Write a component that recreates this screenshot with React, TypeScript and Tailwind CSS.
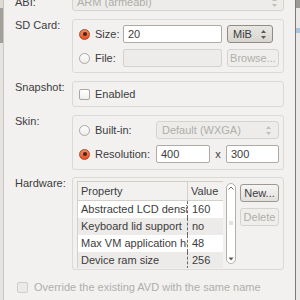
import type { ReactNode } from 'react';

const font = "font-['Liberation_Sans',sans-serif]";

// small stacked up/down arrows used by GTK combo boxes
const Arrows = ({ dim = false }: { dim?: boolean }) => (
  <svg width="7" height="11" viewBox="0 0 7 11" className="shrink-0">
    <polygon points="3.5,1 6,4 1,4" fill={dim ? '#c2bfbb' : '#5a5855'} />
    <polygon points="1,7 6,7 3.5,10" fill={dim ? '#c2bfbb' : '#5a5855'} />
  </svg>
);

const Radio = ({ on = false }: { on?: boolean }) =>
  on ? (
    <span className="w-[11px] h-[11px] rounded-full border border-[#b9451c] bg-gradient-to-b from-[#f6885a] to-[#df5426] flex items-center justify-center shrink-0">
      <span className="w-[4px] h-[4px] rounded-full bg-[#4a2418]" />
    </span>
  ) : (
    <span className="w-[11px] h-[11px] rounded-full border border-[#aaa7a3] bg-gradient-to-b from-white to-[#eeedeb] shrink-0" />
  );

const Check = ({ dim = false }: { dim?: boolean }) => (
  <span
    className={`w-[11px] h-[11px] rounded-[2px] border shrink-0 ${
      dim ? 'border-[#d0cdc9] bg-[#eceae8]' : 'border-[#a9a6a2] bg-gradient-to-b from-white to-[#f0efed]'
    }`}
  />
);

const Field = ({ w, children, dim = false }: { w: string; children?: ReactNode; dim?: boolean }) => (
  <div
    className={`${w} h-full rounded-[2px] border flex items-center pl-[4px] ${
      dim ? 'border-[#d6d3cf] bg-[#edecea]' : 'border-[#aeaaa5] bg-white text-[#3c3c3c]'
    }`}
  >
    {children}
  </div>
);

const Frame = ({ h, children, className = '' }: { h: string; children: ReactNode; className?: string }) => (
  <div className={`${h} w-[212px] rounded-[3px] border border-[#dcd9d5] ${className}`}>{children}</div>
);

const Label = ({ children }: { children: ReactNode }) => (
  <div className="w-[57px] h-[13px] flex items-center shrink-0 text-[#3c3c3c]">{children}</div>
);

const rows = [
  ['Abstracted LCD density', '160'],
  ['Keyboard lid support', 'no'],
  ['Max VM application heap size', '48'],
  ['Device ram size', '256'],
];

export default function App() {
  return (
    <div className={`w-[300px] h-[300px] bg-[#f2f1f0] overflow-hidden flex text-[11px] leading-[13px] ${font}`}>
      {/* left window edge */}
      <div className="w-[4px] h-full flex flex-col border-r border-[#c9c6c2]">
        <div className="h-[8px] bg-[#dddad6]" />
        <div className="h-[35px] bg-[#a3a09c]" />
        <div className="flex-1 bg-[#e6e4e1]" />
      </div>

      <div className="w-[291px] h-full flex flex-col pl-[11px]">
        {/* ABI */}
        <div className="flex items-center h-[18px] -mt-[7px]">
          <div className="w-[57px] text-[#3c3c3c]">ABI:</div>
          <div className="w-[212px] h-full rounded-[3px] border border-[#d6d3cf] bg-[#edecea] flex items-center justify-between pl-[4px] pr-[5px] text-[#aeaca9]">
            ARM (armeabi)
            <Arrows dim />
          </div>
        </div>

        {/* SD Card */}
        <div className="flex mt-[8px]">
          <Label>SD Card:</Label>
          <Frame h="h-[54px]" className="pl-[6px] pt-[5px] flex flex-col gap-[6px]">
            <div className="flex items-center h-[18px]">
              <div className="w-[44px] flex items-center gap-[5px] text-[#3c3c3c]">
                <Radio on />
                Size:
              </div>
              <Field w="w-[99px]">20</Field>
              <div className="ml-[5px] w-[46px] h-full rounded-[3px] border border-[#8f8c88] bg-gradient-to-b from-[#e9e7e4] to-[#d7d4d0] flex items-center justify-between pl-[5px] pr-[5px] text-[#3c3c3c]">
                MiB
                <Arrows />
              </div>
            </div>
            <div className="flex items-center h-[18px]">
              <div className="w-[44px] flex items-center gap-[5px] text-[#3c3c3c]">
                <Radio />
                File:
              </div>
              <Field w="w-[99px]" dim />
              <div className="ml-[5px] w-[52px] h-full rounded-[3px] border border-[#d6d3cf] bg-[#efeeec] flex items-center justify-center text-[#b0aeab]">
                Browse...
              </div>
            </div>
          </Frame>
        </div>

        {/* Snapshot */}
        <div className="flex mt-[8px]">
          <Label>Snapshot:</Label>
          <Frame h="h-[26px]" className="pl-[6px] pt-[4px]">
            <div className="flex items-center h-[16px] gap-[5px] text-[#3c3c3c]">
              <Check />
              Enabled
            </div>
          </Frame>
        </div>

        {/* Skin */}
        <div className="flex mt-[8px]">
          <Label>Skin:</Label>
          <Frame h="h-[55px]" className="pl-[6px] pt-[5px] flex flex-col gap-[6px]">
            <div className="flex items-center h-[18px]">
              <div className="w-[77px] flex items-center gap-[5px] text-[#3c3c3c]">
                <Radio />
                Built-in:
              </div>
              <div className="w-[123px] h-full rounded-[3px] border border-[#d6d3cf] bg-[#edecea] flex items-center justify-between pl-[5px] pr-[6px] text-[#b0aeab]">
                Default (WXGA)
                <Arrows dim />
              </div>
            </div>
            <div className="flex items-center h-[18px]">
              <div className="w-[77px] flex items-center gap-[5px] text-[#3c3c3c]">
                <Radio on />
                Resolution:
              </div>
              <Field w="w-[54px]">400</Field>
              <div className="w-[16px] text-center text-[#3c3c3c]">x</div>
              <Field w="w-[53px]">300</Field>
            </div>
          </Frame>
        </div>

        {/* Hardware */}
        <div className="flex mt-[7px]">
          <Label>Hardware:</Label>
          <Frame h="h-[93px]" className="pl-[4px] pt-[3px] flex">
            <div className="w-[146px] h-[87px] border-t border-l border-[#d3d0cc] flex flex-col overflow-hidden text-[#3c3c3c]">
              <div className="h-[19px] shrink-0 flex border-b border-[#d3d0cc] bg-[#f2f1f0]">
                <div className="w-[110px] pl-[3px] flex items-center border-r border-[#d3d0cc]">Property</div>
                <div className="flex-1 pl-[3px] flex items-center">Value</div>
              </div>
              {rows.map(([k, v], i) => (
                <div key={k} className={`h-[17px] shrink-0 flex ${i % 2 ? 'bg-[#ecebe9]' : 'bg-white'}`}>
                  <div className="w-[110px] pl-[3px] flex items-center whitespace-nowrap overflow-hidden border-r border-dashed border-[#6a6865]">
                    {k}
                  </div>
                  <div className="flex-1 pl-[4px] flex items-center">{v}</div>
                </div>
              ))}
            </div>

            {/* scrollbar */}
            <div className="ml-[3px] mt-[2px] w-[10px] h-[81px] rounded-full border border-[#b3b0ac] bg-white flex flex-col items-center justify-between py-[2px]">
              <svg width="6" height="4" viewBox="0 0 6 4">
                <polyline points="0.5,3.5 3,1 5.5,3.5" fill="none" stroke="#6d6b68" strokeWidth="1" />
              </svg>
              <svg width="6" height="5" viewBox="0 0 6 5">
                <line x1="1" y1="1" x2="5" y2="1" stroke="#c7c4c0" />
                <line x1="1" y1="3" x2="5" y2="3" stroke="#c7c4c0" />
              </svg>
              <svg width="6" height="4" viewBox="0 0 6 4">
                <polygon points="0.5,0.5 5.5,0.5 3,3.5" fill="#5a5855" />
              </svg>
            </div>

            <div className="ml-[4px] mt-[3px] w-[39px] flex flex-col gap-[6px]">
              <div className="h-[18px] rounded-[3px] border border-[#9c9995] bg-gradient-to-b from-[#f7f6f5] to-[#e1dfdc] flex items-center justify-center text-[#3c3c3c]">
                New...
              </div>
              <div className="h-[18px] rounded-[3px] border border-[#d6d3cf] bg-[#efeeec] flex items-center justify-center text-[#b0aeab]">
                Delete
              </div>
            </div>
          </Frame>
        </div>

        {/* Override */}
        <div className="flex items-center h-[18px] mt-[8px] pl-[2px] gap-[6px] text-[#b0aeab] whitespace-nowrap">
          <Check dim />
          Override the existing AVD with the same name
        </div>
      </div>

      {/* right window edge */}
      <div className="w-[1px] h-full bg-[#7d7b78]" />
      <div className="w-[4px] h-full flex flex-col bg-[#eae9e7]">
        <div className="h-[8px] bg-[#9c9a97]" />
        <div className="h-[20px]" />
        <div className="h-[5px] bg-[#a9c4de]" />
      </div>
    </div>
  );
}
